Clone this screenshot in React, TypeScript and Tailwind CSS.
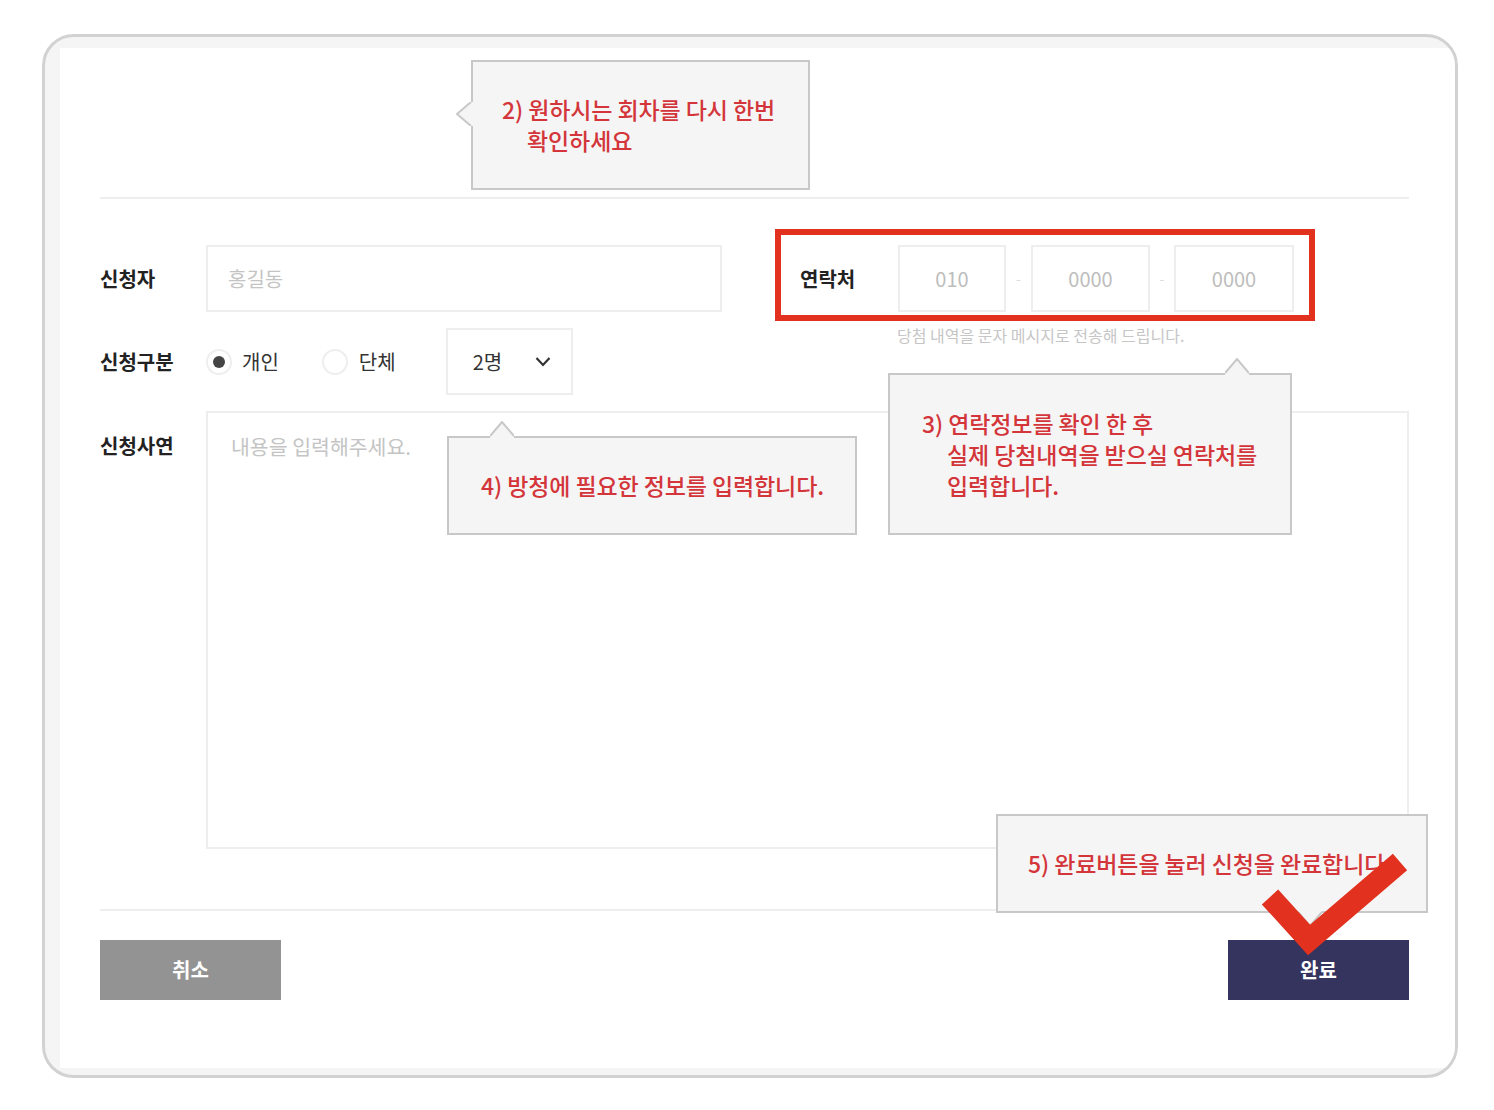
import React from "react";

function Callout({
  left,
  top,
  width,
  height,
  pl,
  children,
}: {
  left: number;
  top: number;
  width: number;
  height: number;
  pl: number;
  children: React.ReactNode;
}) {
  return (
    <div
      className="absolute flex flex-col justify-center border-2 border-[#c8c8c8] bg-[#f5f5f5] text-[23px] font-medium leading-[31px] tracking-[-0.1px] text-[#d3353a] whitespace-nowrap"
      style={{ left, top, width, height, paddingLeft: pl }}
    >
      {children}
    </div>
  );
}

function ArrowUp({ x, y }: { x: number; y: number }) {
  return (
    <svg className="absolute" style={{ left: x - 12, top: y - 1 }} width={24} height={17}>
      <polygon points="0,15 12,1 24,15 24,17 0,17" fill="#f5f5f5" />
      <polyline points="0,15 12,1 24,15" fill="none" stroke="#c8c8c8" strokeWidth={2} />
    </svg>
  );
}

function ArrowDown({ x, y }: { x: number; y: number }) {
  return (
    <svg className="absolute" style={{ left: x - 12, top: y - 16 }} width={24} height={17}>
      <polygon points="0,2 12,16 24,2 24,0 0,0" fill="#f5f5f5" />
      <polyline points="0,2 12,16 24,2" fill="none" stroke="#c8c8c8" strokeWidth={2} />
    </svg>
  );
}

function ArrowLeft({ x, y }: { x: number; y: number }) {
  return (
    <svg className="absolute" style={{ left: x - 1, top: y - 12 }} width={17} height={24}>
      <polygon points="15,0 1,12 15,24 17,24 17,0" fill="#f5f5f5" />
      <polyline points="15,0 1,12 15,24" fill="none" stroke="#c8c8c8" strokeWidth={2} />
    </svg>
  );
}

export default function App() {
  return (
    <div className="relative w-[1494px] h-[1110px] bg-white pt-[34px] pl-[42px] font-['Noto_Sans_CJK_KR','Noto_Sans',sans-serif] text-[#333]">
      {/* frame */}
      <div className="flex w-[1416px] h-[1044px] rounded-[32px] border-[3px] border-[#d2d2d2] bg-[#f5f5f5] pt-[11px] pl-[15px] pb-[7px] overflow-hidden">
        <div className="flex-1 bg-white flex flex-col pl-[40px] pr-[46px]">
          <div className="h-[151px] shrink-0 border-b-2 border-[#eeeeee]" />

          {/* row 1 */}
          <div className="mt-[46px] flex items-center h-[67px]">
            <div className="w-[106px] text-[20px] font-bold text-[#222]">신청자</div>
            <div className="w-[516px] h-[67px] border-2 border-[#eeeeee] flex items-center pl-[20px] text-[20px] text-[#c4c4c4]">
              홍길동
            </div>
            <div className="relative ml-[78px] flex items-center h-[67px]">
              <div className="w-[98px] text-[20px] font-bold text-[#222]">연락처</div>
              <div className="w-[108px] h-[67px] border-2 border-[#eeeeee] flex items-center justify-center text-[20px] text-[#bdbdbd]">
                010
              </div>
              <div className="w-[25px] text-center text-[14px] text-[#dddddd]">-</div>
              <div className="w-[119px] h-[67px] border-2 border-[#eeeeee] flex items-center justify-center text-[20px] text-[#bdbdbd]">
                0000
              </div>
              <div className="w-[24px] text-center text-[14px] text-[#dddddd]">-</div>
              <div className="w-[120px] h-[67px] border-2 border-[#eeeeee] flex items-center justify-center text-[20px] text-[#bdbdbd]">
                0000
              </div>
              <div className="absolute left-[-25px] top-[-16px] w-[540px] h-[92px] border-[6px] border-[#e2311f]" />
              <div className="absolute left-[97px] top-[78px] whitespace-nowrap text-[16px] text-[#c6c6c6]">
                당첨 내역을 문자 메시지로 전송해 드립니다.
              </div>
            </div>
          </div>

          {/* row 2 */}
          <div className="mt-[16px] flex items-center h-[67px]">
            <div className="w-[106px] text-[20px] font-bold text-[#222]">신청구분</div>
            <div className="w-[26px] h-[26px] rounded-full border-2 border-[#eeeeee] flex items-center justify-center">
              <div className="w-[12px] h-[12px] rounded-full bg-[#444]" />
            </div>
            <div className="ml-[10px] text-[20px] text-[#333]">개인</div>
            <div className="ml-[43px] w-[26px] h-[26px] rounded-full border-2 border-[#eeeeee]" />
            <div className="ml-[11px] text-[20px] text-[#333]">단체</div>
            <div className="ml-[50px] w-[127px] h-[67px] border-2 border-[#eeeeee] flex items-center pl-[25px] pr-[20px] justify-between">
              <span className="text-[20px] text-[#333]">2명</span>
              <svg width="16" height="11" viewBox="0 0 16 11">
                <polyline points="1.5,2 8,9 14.5,2" fill="none" stroke="#333" strokeWidth={2.2} />
              </svg>
            </div>
          </div>

          {/* row 3 */}
          <div className="mt-[16px] flex items-start">
            <div className="w-[106px] pt-[20px] text-[20px] font-bold text-[#222]">신청사연</div>
            <div className="flex-1 h-[438px] border-2 border-[#eeeeee] pl-[23px] pt-[18px] text-[20.5px] text-[#c4c4c4]">
              내용을 입력해주세요.
            </div>
          </div>

          <div className="mt-[60px] h-[2px] bg-[#eeeeee] shrink-0" />

          {/* buttons */}
          <div className="mt-[29px] flex justify-between">
            <div className="w-[181px] h-[60px] bg-[#939393] flex items-center justify-center text-[20px] font-bold text-white">
              취소
            </div>
            <div className="w-[181px] h-[60px] bg-[#34345f] flex items-center justify-center text-[20px] font-bold text-white">
              완료
            </div>
          </div>
        </div>
      </div>

      {/* annotation layer */}
      <Callout left={471} top={60} width={339} height={130} pl={29}>
        <div>2) 원하시는 회차를 다시 한번</div>
        <div className="pl-[25px]">확인하세요</div>
      </Callout>
      <ArrowLeft x={457} y={114} />

      <Callout left={888} top={373} width={404} height={162} pl={32}>
        <div>3) 연락정보를 확인 한 후</div>
        <div className="pl-[25px]">실제 당첨내역을 받으실 연락처를</div>
        <div className="pl-[25px]">입력합니다.</div>
      </Callout>
      <ArrowUp x={1237} y={359} />

      <Callout left={447} top={436} width={410} height={99} pl={32}>
        <div>4) 방청에 필요한 정보를 입력합니다.</div>
      </Callout>
      <ArrowUp x={502} y={422} />

      <Callout left={996} top={814} width={432} height={99} pl={30}>
        <div>5) 완료버튼을 눌러 신청을 완료합니다.</div>
      </Callout>
      <ArrowDown x={1310} y={926} />

      <svg className="absolute left-0 top-0 pointer-events-none" width={1494} height={1110}>
        <polyline
          points="1270,897 1309,940 1400,862"
          fill="none"
          stroke="#e2311f"
          strokeWidth={22}
          strokeLinecap="butt"
          strokeLinejoin="miter"
        />
      </svg>
    </div>
  );
}
